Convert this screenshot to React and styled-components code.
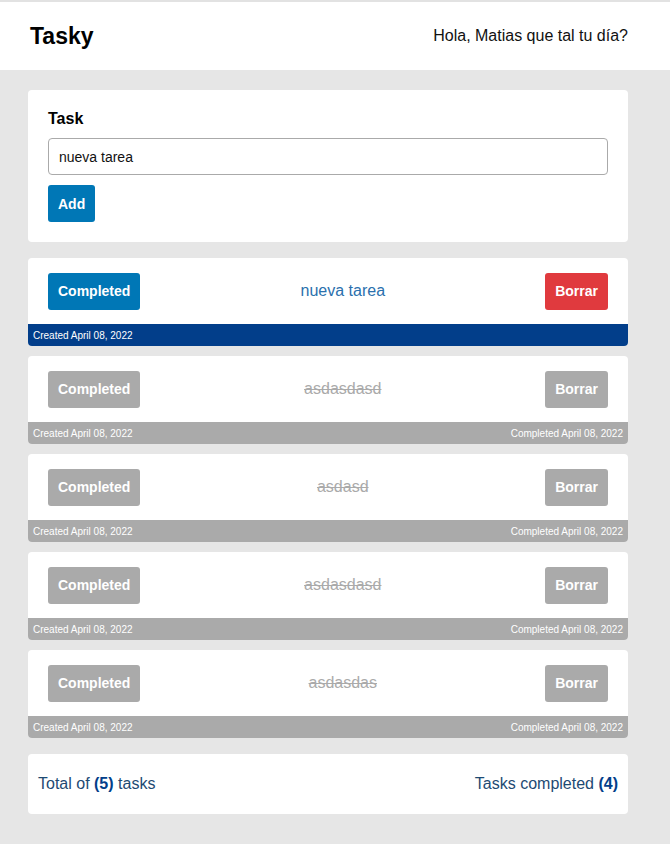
import styled, { createGlobalStyle } from "styled-components";

const tasks = [
    { id: 1, text: "nueva tarea", created: "April 08, 2022", done: false },
    { id: 2, text: "asdasdasd", created: "April 08, 2022", done: true, completed: "April 08, 2022" },
    { id: 3, text: "asdasd", created: "April 08, 2022", done: true, completed: "April 08, 2022" },
    { id: 4, text: "asdasdasd", created: "April 08, 2022", done: true, completed: "April 08, 2022" },
    { id: 5, text: "asdasdas", created: "April 08, 2022", done: true, completed: "April 08, 2022" },
];

export default function App() {
    const completedCount = tasks.filter(t => t.done).length;

    return (
        <>
        <GlobalStyle />
        <Header>
            <h1>Tasky</h1>
            <p>Hola, Matias que tal tu día?</p>
        </Header>
        <Main>
            <Card>
                <Label htmlFor="task">Task</Label>
                <Input id="task" defaultValue="nueva tarea" />
                <div>
                    <Button $color="#0077b6">Add</Button>
                </div>
            </Card>
            <TaskList>
                {tasks.map(task => (
                    <TaskItem key={task.id}>
                        <TaskBody>
                            <Button $color={task.done ? "#aaaaaa" : "#0077b6"}>Completed</Button>
                            <TaskText $done={task.done}>{task.text}</TaskText>
                            <Button $color={task.done ? "#aaaaaa" : "#e03a3e"}>Borrar</Button>
                        </TaskBody>
                        <TaskFooter $done={task.done}>
                            <span>Created {task.created}</span>
                            {task.done && <span>Completed {task.completed}</span>}
                        </TaskFooter>
                    </TaskItem>
                ))}
            </TaskList>
            <Summary>
                <span>Total of <b>({tasks.length})</b> tasks</span>
                <span>Tasks completed <b>({completedCount})</b></span>
            </Summary>
        </Main>
        </>
    );
}

const GlobalStyle = createGlobalStyle`
    * {
        box-sizing: border-box;
    }
    body {
        margin: 0;
        background-color: #e6e6e6;
        font-family: "Liberation Sans", Arial, sans-serif;
        border-top: 2px solid #e2e2e2;
    }
`;

const Header = styled.header`
    height: 68px;
    padding: 0 42px 0 30px;
    background-color: #ffffff;
    display: flex;
    justify-content: space-between;
    align-items: center;

    h1 {
        margin: 0;
        font-size: 23px;
        font-weight: 700;
        color: #000000;
    }

    p {
        margin: 0;
        font-size: 16px;
        color: #111111;
    }
`;

const Main = styled.main`
    width: 600px;
    margin: 20px 0 0 28px;
    padding-bottom: 30px;
    display: flex;
    flex-direction: column;
`;

const Card = styled.div`
    padding: 19px 20px 20px;
    background-color: #ffffff;
    border-radius: 4px;
    display: flex;
    flex-direction: column;
`;

const Label = styled.label`
    font-size: 16px;
    font-weight: 700;
    color: #000000;
    line-height: 20px;
    margin-bottom: 9px;
`;

const Input = styled.input`
    width: 100%;
    height: 37px;
    padding: 0 10px;
    margin-bottom: 10px;
    font-family: "Liberation Sans", Arial, sans-serif;
    font-size: 14px;
    color: #111111;
    border: 1px solid #aaaaaa;
    border-radius: 4px;
    outline: none;
`;

const Button = styled.button`
    height: 37px;
    padding: 0 10px;
    font-family: "Liberation Sans", Arial, sans-serif;
    font-size: 14px;
    font-weight: 700;
    color: #ffffff;
    background-color: ${props => props.$color};
    border: none;
    border-radius: 3px;
    cursor: pointer;
`;

const TaskList = styled.ul`
    list-style: none;
    margin: 16px 0 0;
    padding: 0;
    display: flex;
    flex-direction: column;
    gap: 10px;
`;

const TaskItem = styled.li`
    background-color: #ffffff;
    border-radius: 4px;
    overflow: hidden;
`;

const TaskBody = styled.div`
    height: 66px;
    padding: 0 20px;
    display: flex;
    justify-content: space-between;
    align-items: center;
`;

const TaskText = styled.span`
    font-size: 16px;
    color: ${props => props.$done ? "#aaaaaa" : "#2a70ad"};
    text-decoration: ${props => props.$done ? "line-through" : "none"};
`;

const TaskFooter = styled.div`
    height: 22px;
    padding: 0 5px;
    background-color: ${props => props.$done ? "#aaaaaa" : "#023e8a"};
    display: flex;
    justify-content: space-between;
    align-items: center;
    font-size: 10px;
    color: #ffffff;
`;

const Summary = styled.div`
    height: 60px;
    margin-top: 16px;
    padding: 0 10px;
    background-color: #ffffff;
    border-radius: 4px;
    display: flex;
    justify-content: space-between;
    align-items: center;
    font-size: 16px;
    color: #1d4a73;

    b {
        color: #023e8a;
    }
`;
